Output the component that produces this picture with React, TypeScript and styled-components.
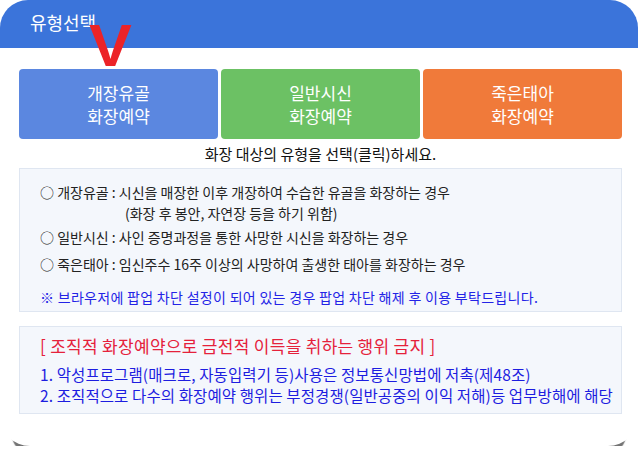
import styled, { createGlobalStyle } from 'styled-components'

const GlobalStyle = createGlobalStyle`
  html, body {
    margin: 0;
    padding: 0;
    background: #fff;
    overflow: hidden;
  }
  body {
    font-family: "Noto Sans CJK KR", "Noto Sans", sans-serif;
  }
`

const Card = styled.div`
  position: relative;
  width: 638px;
  height: 446px;
  background: #fff;
  border-radius: 0 0 30px 30px;
  box-shadow: 0 19px 1px -12px #747474;
`

const Header = styled.div`
  height: 48px;
  background: #3b74da;
  border-radius: 28px 28px 0 0;
  display: flex;
  align-items: center;
  padding-left: 30px;
  padding-bottom: 4px;
  box-sizing: border-box;
`

const Title = styled.h1`
  margin: 0;
  color: #fff;
  font-size: 18px;
  font-weight: 400;
  line-height: 22px;
  letter-spacing: -0.1px;
`

// red check mark sitting over the first type button
const Mark = styled.span`
  position: absolute;
  left: 89px;
  top: 16px;
  z-index: 2;
  color: #ec2327;
  font-family: "Liberation Sans", Arial, sans-serif;
  font-weight: 700;
  font-size: 60px;
  line-height: 60px;
  transform: scaleX(1.07);
  transform-origin: left top;
`

const Body = styled.div`
  padding: 21px 16px 0 19px;
`

const Types = styled.div`
  display: grid;
  grid-template-columns: repeat(3, 1fr);
  gap: 3px;
`

const TypeButton = styled.button<{ $bg: string }>`
  height: 70px;
  border: 0;
  border-radius: 4px;
  background: ${(p) => p.$bg};
  color: #fff;
  font-family: inherit;
  font-size: 17px;
  line-height: 23px;
  cursor: pointer;
  display: flex;
  flex-direction: column;
  align-items: center;
  justify-content: center;
`

const Caption = styled.p`
  margin: 5px 0 0;
  text-align: center;
  color: #111;
  font-size: 15px;
  line-height: 20px;
`

const InfoBox = styled.div<{ $h: number }>`
  box-sizing: border-box;
  height: ${(p) => p.$h}px;
  margin-top: 4px;
  padding: 0 0 0 20px;
  background: #f4f7fc;
  border: 1px solid #dfe6f1;
  & + & {
    margin-top: 14px;
  }
`

const Item = styled.p<{ $top: number; $indent?: number }>`
  margin: ${(p) => p.$top}px 0 0 ${(p) => p.$indent ?? 0}px;
  color: #222;
  font-size: 14px;
  line-height: 20px;
  white-space: nowrap;
`

const Notice = styled(Item)`
  color: #2323e6;
  letter-spacing: 0.3px;
`

const Warning = styled.p`
  margin: 8px 0 0;
  color: #e5213b;
  font-size: 17px;
  line-height: 22px;
  letter-spacing: 0.3px;
`

const Rule = styled.p<{ $top: number }>`
  margin: ${(p) => p.$top}px 0 0;
  color: #1d1de0;
  font-size: 15.5px;
  line-height: 20px;
  letter-spacing: 0.1px;
  white-space: nowrap;
`

const types = [
  { name: '개장유골', bg: '#5b87e0' },
  { name: '일반시신', bg: '#6cc164' },
  { name: '죽은태아', bg: '#f07a3a' },
]

export default function App() {
  return (
    <>
      <GlobalStyle />
      <Card>
        <Header>
          <Title>유형선택</Title>
        </Header>
        <Mark>V</Mark>
        <Body>
          <Types>
            {types.map((t) => (
              <TypeButton key={t.name} $bg={t.bg}>
                <span>{t.name}</span>
                <span>화장예약</span>
              </TypeButton>
            ))}
          </Types>
          <Caption>화장 대상의 유형을 선택(클릭)하세요.</Caption>

          <InfoBox $h={144}>
            <Item $top={13}>○ 개장유골 : 시신을 매장한 이후 개장하여 수습한 유골을 화장하는 경우</Item>
            <Item $top={1} $indent={85}>(화장 후 봉안, 자연장 등을 하기 위함)</Item>
            <Item $top={4}>○ 일반시신 : 사인 증명과정을 통한 사망한 시신을 화장하는 경우</Item>
            <Item $top={7}>○ 죽은태아 : 임신주수 16주 이상의 사망하여 출생한 태아를 화장하는 경우</Item>
            <Notice $top={13}>※ 브라우저에 팝업 차단 설정이 되어 있는 경우 팝업 차단 해제 후 이용 부탁드립니다.</Notice>
          </InfoBox>

          <InfoBox $h={88}>
            <Warning>[ 조직적 화장예약으로 금전적 이득을 취하는 행위 금지 ]</Warning>
            <Rule $top={7}>1. 악성프로그램(매크로, 자동입력기 등)사용은 정보통신망법에 저촉(제48조)</Rule>
            <Rule $top={1}>2. 조직적으로 다수의 화장예약 행위는 부정경쟁(일반공중의 이익 저해)등 업무방해에 해당</Rule>
          </InfoBox>
        </Body>
      </Card>
    </>
  )
}
